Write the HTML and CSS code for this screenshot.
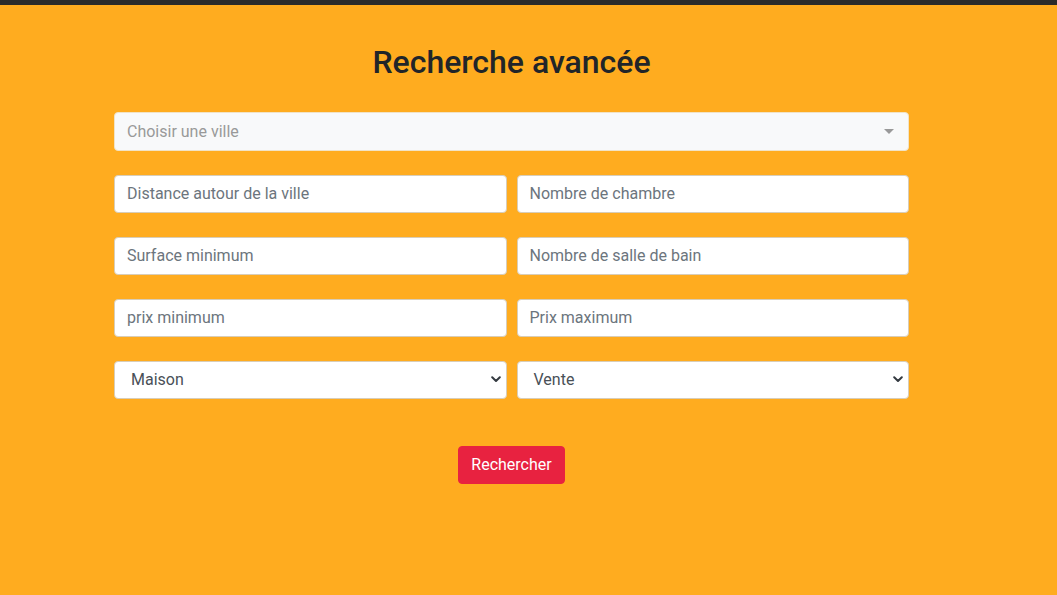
FILE: index.html
```html
<!DOCTYPE html>
<html lang="fr">
<head>
<meta charset="utf-8">
<title>Recherche avancée</title>
<link rel="stylesheet" href="styles.css">
</head>
<body>
<div class="topbar"></div>
<main class="page">
  <div class="container">
    <h1 class="title">Recherche avancée</h1>
    <form class="form">
      <div class="city">
        <span class="city-placeholder">Choisir une ville</span>
        <span class="city-arrow"></span>
      </div>
      <div class="grid">
        <input class="field" type="text" placeholder="Distance autour de la ville">
        <input class="field" type="text" placeholder="Nombre de chambre">
        <input class="field" type="text" placeholder="Surface minimum">
        <input class="field" type="text" placeholder="Nombre de salle de bain">
        <input class="field" type="text" placeholder="prix minimum">
        <input class="field" type="text" placeholder="Prix maximum">
        <div class="select">
          <span>Maison</span>
          <svg class="chev" width="10" height="7" viewBox="0 0 10 7"><path d="M1.2 1.3 L5 5 L8.8 1.3" fill="none" stroke="#343a40" stroke-width="2" stroke-linecap="round" stroke-linejoin="round"/></svg>
        </div>
        <div class="select">
          <span>Vente</span>
          <svg class="chev" width="10" height="7" viewBox="0 0 10 7"><path d="M1.2 1.3 L5 5 L8.8 1.3" fill="none" stroke="#343a40" stroke-width="2" stroke-linecap="round" stroke-linejoin="round"/></svg>
        </div>
      </div>
      <div class="actions">
        <button class="btn" type="button">Rechercher</button>
      </div>
    </form>
  </div>
</main>
</body>
</html>
```
FILE: styles.css
```css
* { box-sizing: border-box; }
html, body {
  margin: 0;
  height: 100%;
}
body {
  background: #ffac1f;
  font-family: Roboto, "Liberation Sans", sans-serif;
  color: #212529;
}
.topbar {
  height: 5px;
  background: #2b2b2b;
}
.page {
  padding-top: 38px;
}
.container {
  width: 795px;
  margin-left: 114px;
}
.title {
  margin: 0;
  text-align: center;
  font-size: 32px;
  font-weight: 500;
  line-height: 38px;
  color: #212529;
}
.form {
  margin-top: 31px;
}
.city {
  height: 39px;
  background: #f8f9fa;
  border: 1px solid #f1e3c6;
  border-radius: 4px;
  display: flex;
  align-items: center;
  justify-content: space-between;
  padding: 0 14px 0 12px;
}
.city-placeholder {
  color: #999999;
  font-size: 16px;
}
.city-arrow {
  width: 0;
  height: 0;
  border-left: 5px solid transparent;
  border-right: 5px solid transparent;
  border-top: 5px solid #999999;
}
.grid {
  margin-top: 24px;
  display: grid;
  grid-template-columns: 1fr 1fr;
  column-gap: 10px;
  row-gap: 24px;
}
.field {
  height: 38px;
  border: 1px solid #d8cdb8;
  border-radius: 4px;
  background: #ffffff;
  padding: 0 12px 1px;
  font-family: inherit;
  font-size: 16px;
  color: #212529;
  outline: none;
}
.field::placeholder {
  color: #6c757d;
  opacity: 1;
}
.select {
  height: 38px;
  border: 1px solid #d8cdb8;
  border-radius: 4px;
  background: #ffffff;
  display: flex;
  align-items: center;
  justify-content: space-between;
  padding: 0 5px 1px 16px;
  font-size: 16px;
  color: #495057;
}
.chev {
  display: block;
}
.actions {
  margin-top: 47px;
  display: flex;
  justify-content: center;
}
.btn {
  height: 38px;
  padding: 0 12px 1px;
  background: #e82240;
  border: 1px solid #e82240;
  border-radius: 4px;
  color: #ffffff;
  font-family: inherit;
  font-size: 16px;
}
```
